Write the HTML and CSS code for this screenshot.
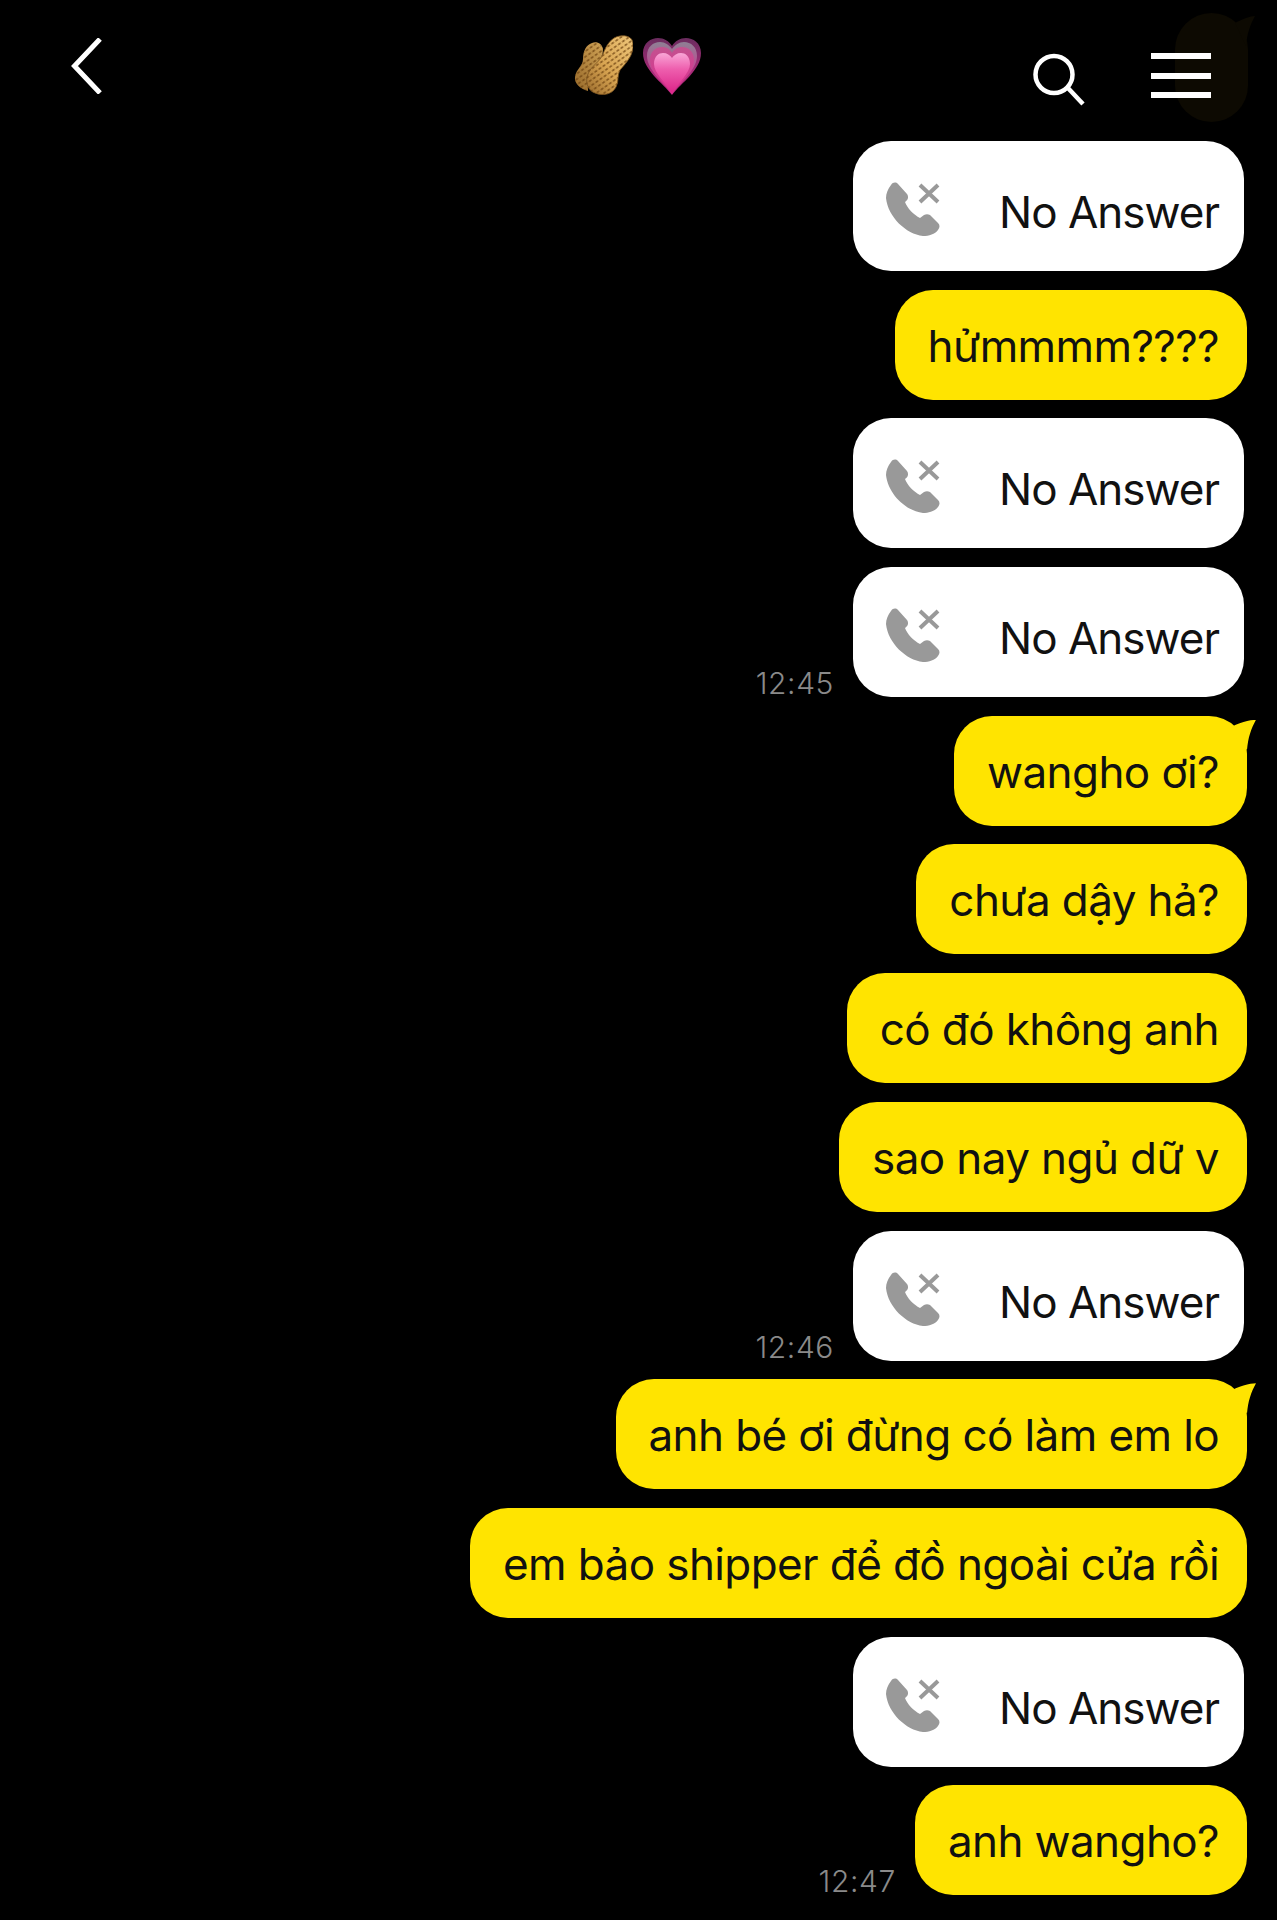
FILE: index.html
```html
<!DOCTYPE html>
<html lang="en">

<head>
    <meta charset="UTF-8" />
    <meta name="viewport" content="width=device-width, initial-scale=1.0" />
    <title>Chat</title>
    <link rel="stylesheet" href="styles.css">
</head>

<body>
    <svg class="defs" width="0" height="0">
        <defs>
            <symbol id="missed" viewBox="0 0 54 54">
                <path d="M5 3C7 0 10 0 12 2L21 12C23 15 22 18 19 20C21 26 28 33 34 36L38 33C40 32 42 32 44 33L52 41C54 43 54 45 52 48C49 52 43 54 37 54C20 52 2 35 0 16C0 11 2 7 5 3Z" fill="#999" />
                <path d="M34 3L52 20M52 3L34 20" stroke="#999" stroke-width="4" fill="none" />
            </symbol>
            <linearGradient id="nut" x1="1" y1="0" x2="0" y2="1">
                <stop offset="0" stop-color="#eec67a" />
                <stop offset="0.55" stop-color="#d9a552" />
                <stop offset="1" stop-color="#9c6d2e" />
            </linearGradient>
            <linearGradient id="nutBack" x1="1" y1="0" x2="0" y2="1">
                <stop offset="0" stop-color="#cfa255" />
                <stop offset="1" stop-color="#996b2b" />
            </linearGradient>
            <pattern id="shell" width="5" height="4.500" patternUnits="userSpaceOnUse" patternTransform="rotate(-35)">
                <rect x="0.500" y="1" width="3" height="1.600" fill="#6f4512" opacity="0.8" />
            </pattern>
            <linearGradient id="pink" x1="0" y1="0" x2="0" y2="1">
                <stop offset="0" stop-color="#f9a6d6" />
                <stop offset="0.4" stop-color="#ee5fae" />
                <stop offset="1" stop-color="#dc2488" />
            </linearGradient>
            <linearGradient id="ringOuter" x1="0" y1="0" x2="0" y2="1">
                <stop offset="0" stop-color="#6a2c5e" />
                <stop offset="0.6" stop-color="#a82a78" />
                <stop offset="1" stop-color="#c0267f" />
            </linearGradient>
            <linearGradient id="ringMid" x1="0" y1="0" x2="0" y2="1">
                <stop offset="0" stop-color="#8d8094" />
                <stop offset="0.5" stop-color="#c04a92" />
                <stop offset="1" stop-color="#d02a88" />
            </linearGradient>
            <linearGradient id="ringInner" x1="0" y1="0" x2="0" y2="1">
                <stop offset="0" stop-color="#c2528f" />
                <stop offset="1" stop-color="#e02b90" />
            </linearGradient>
        </defs>
    </svg>

    <div class="ghost"></div>

    <header class="topbar">
        <svg class="back" viewBox="0 0 32 56" width="32" height="56">
            <path d="M29 1L3.500 28L29 55" fill="none" stroke="#fff" stroke-width="5" />
        </svg>

        <div class="title">
            <svg viewBox="0 0 59 60" width="59" height="60">
                <path d="M18 8C23 6 28 9 29 14L28 25C20 30 14 38 14 50L14 56C6 54 0 48 1 42C2 34 9 31 9 24C9 16 12 10 18 8Z" fill="url(#nutBack)" />
                <path d="M18 8C23 6 28 9 29 14L28 25C20 30 14 38 14 50L14 56C6 54 0 48 1 42C2 34 9 31 9 24C9 16 12 10 18 8Z" fill="url(#shell)" />
                <path d="M46 1C52 0 59 2 59 9C60 20 52 28 46 35C43 40 45 47 42 52C38 60 28 61 21 58C13 55 11 46 14 39C17 31 26 27 29 19C32 11 37 2 46 1Z" fill="url(#nut)" stroke="#7a5320" stroke-width="0.800" />
                <path d="M46 1C52 0 59 2 59 9C60 20 52 28 46 35C43 40 45 47 42 52C38 60 28 61 21 58C13 55 11 46 14 39C17 31 26 27 29 19C32 11 37 2 46 1Z" fill="url(#shell)" />
            </svg>
            <svg class="heart" viewBox="0 0 58 57" width="58" height="57">
                <path d="M29 57C20 45 0 32 0 15C0 5 8 0 15 0C21 0 26 3 29 8C32 3 37 0 43 0C50 0 58 5 58 15C58 32 38 45 29 57Z" fill="url(#ringOuter)" />
                <path d="M29 56C21 45 4 32 4 18C4 9 10 4 17 4C22 4 26 7 29 11C32 7 36 4 41 4C48 4 54 9 54 18C54 32 37 45 29 56Z" fill="url(#ringMid)" />
                <path d="M29 56C22 45 7 34 7 22C7 13 13 9 19 9C23 9 27 11 29 15C31 11 35 9 39 9C45 9 51 13 51 22C51 34 36 45 29 56Z" fill="url(#ringInner)" />
                <path d="M29 55C23 45 11 35 11 26C11 18 16 15 20 15C24 15 27 17 29 20C31 17 34 15 38 15C42 15 47 18 47 26C47 35 35 45 29 55Z" fill="url(#pink)" />
            </svg>
        </div>

        <div class="actions">
            <svg class="search" viewBox="0 0 54 54" width="54" height="54">
                <circle cx="22" cy="21.500" r="18.500" fill="none" stroke="#fff" stroke-width="4.500" />
                <path d="M35 34L51 51" fill="none" stroke="#fff" stroke-width="4.500" />
            </svg>
            <div class="menu">
                <span></span>
                <span></span>
                <span></span>
            </div>
        </div>
    </header>

    <main class="chat">
        <div class="row">
            <div class="call">
                <svg class="call-icon"><use href="#missed" /></svg>
                <span class="call-label">No Answer</span>
            </div>
        </div>
        <div class="row"><div class="bubble">hửmmmm????</div></div>
        <div class="row">
            <div class="call">
                <svg class="call-icon"><use href="#missed" /></svg>
                <span class="call-label">No Answer</span>
            </div>
        </div>
        <div class="row">
            <time class="stamp">12:45</time>
            <div class="call">
                <svg class="call-icon"><use href="#missed" /></svg>
                <span class="call-label">No Answer</span>
            </div>
        </div>
        <div class="row"><div class="bubble tail">wangho ơi?</div></div>
        <div class="row"><div class="bubble">chưa dậy hả?</div></div>
        <div class="row"><div class="bubble">có đó không anh</div></div>
        <div class="row"><div class="bubble">sao nay ngủ dữ v</div></div>
        <div class="row">
            <time class="stamp">12:46</time>
            <div class="call">
                <svg class="call-icon"><use href="#missed" /></svg>
                <span class="call-label">No Answer</span>
            </div>
        </div>
        <div class="row"><div class="bubble tail">anh bé ơi đừng có làm em lo</div></div>
        <div class="row"><div class="bubble">em bảo shipper để đồ ngoài cửa rồi</div></div>
        <div class="row">
            <div class="call">
                <svg class="call-icon"><use href="#missed" /></svg>
                <span class="call-label">No Answer</span>
            </div>
        </div>
        <div class="row">
            <time class="stamp">12:47</time>
            <div class="bubble">anh wangho?</div>
        </div>
    </main>
</body>

</html>
```

FILE: styles.css
```css
* {
    box-sizing: border-box;
    margin: 0;
    padding: 0;
}

html,
body {
    height: 1920px;
    overflow: hidden;
}

body {
    position: relative;
    background: #000;
    font-family: 'Inter', 'Noto Sans', sans-serif;
}

.defs {
    position: absolute;
}

/* faint leftover bubble behind the menu icon */
.ghost {
    position: absolute;
    top: 13px;
    left: 1175px;
    width: 73px;
    height: 109px;
    background: #0d0a02;
    border-radius: 38px;
}

.ghost::after {
    content: "";
    position: absolute;
    top: 3px;
    right: -7px;
    width: 20px;
    height: 30px;
    background: #0d0a02;
    clip-path: path("M20 0C15 0 8 3 0 7L11 30C12 18 15 9 20 0Z");
}

.topbar {
    position: relative;
    height: 141px;
    display: grid;
    grid-template-columns: 1fr auto 1fr;
    padding: 38px 66px 0 71px;
    align-items: start;
}

.title {
    display: flex;
    gap: 10px;
    margin-top: -3px;
    margin-right: 7px;
}

.heart {
    margin-top: 3px;
}

.actions {
    display: flex;
    justify-content: flex-end;
    gap: 65px;
    padding-top: 15px;
}

.menu {
    width: 60px;
    height: 45px;
    display: flex;
    flex-direction: column;
    justify-content: space-between;
}

.menu span {
    height: 6px;
    background: #fff;
}

.chat {
    display: flex;
    flex-direction: column;
    gap: 18.7px;
    padding-right: 30px;
}

.row {
    display: flex;
    justify-content: flex-end;
    align-items: flex-end;
    gap: 19px;
}

.stamp {
    color: #8a8a8a;
    font-size: 30px;
    font-weight: 300;
    letter-spacing: 0.6px;
    line-height: 28px;
}

.call {
    width: 391px;
    height: 130px;
    margin-right: 3px;
    padding: 0 25px 0 33px;
    display: flex;
    align-items: center;
    justify-content: space-between;
    background: #fff;
    border-radius: 38px;
    color: #111;
    font-size: 44px;
    letter-spacing: -1px;
}

.call-icon {
    width: 54px;
    height: 54px;
    margin-top: 6px;
}

.call-label {
    margin-top: 12px;
}

.bubble {
    position: relative;
    height: 110px;
    padding: 2px 28px 0 33px;
    display: flex;
    align-items: center;
    background: #ffe400;
    border-radius: 38px;
    color: #111;
    font-size: 44px;
    letter-spacing: -0.6px;
    white-space: nowrap;
}

.tail::after {
    content: "";
    position: absolute;
    top: 4px;
    right: -9px;
    width: 28px;
    height: 30px;
    background: #ffe400;
    clip-path: path("M28 0C22 0 10 3 0 9L19 30C20 18 23 9 28 0Z");
}
```
